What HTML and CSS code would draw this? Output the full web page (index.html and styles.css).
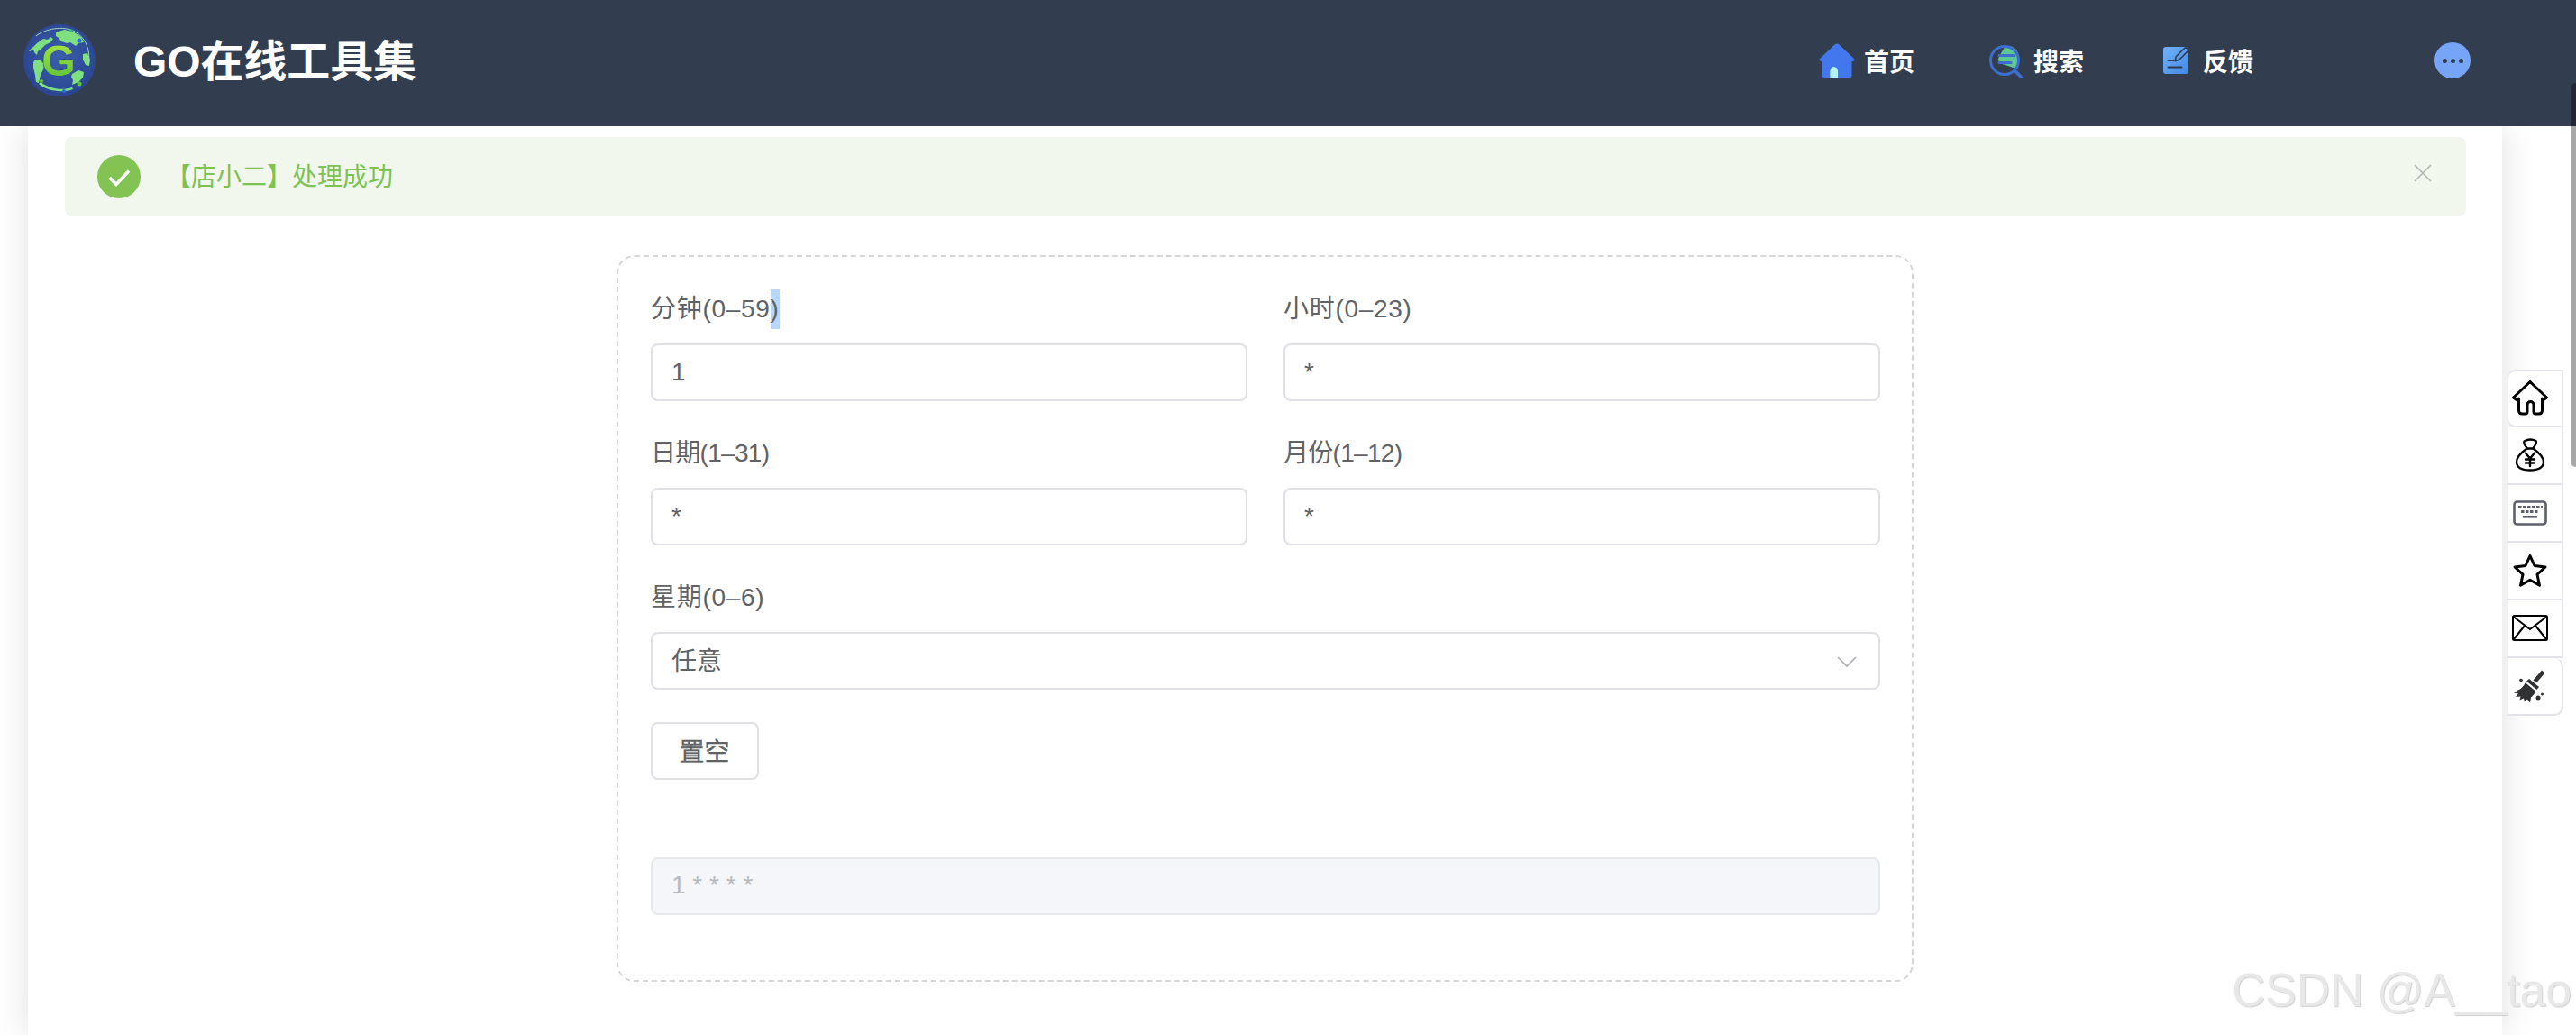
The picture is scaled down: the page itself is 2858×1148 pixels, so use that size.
FILE: index.html
```html
<!DOCTYPE html>
<html lang="zh-CN">
<head>
<meta charset="utf-8">
<title>GO在线工具集</title>
<link rel="stylesheet" href="styles.css">
</head>
<body>
<header class="topbar">
  <svg class="logo" viewBox="0 0 80 80" aria-hidden="true">
    <defs>
      <radialGradient id="globe" cx="50%" cy="45%" r="55%"><stop offset="0" stop-color="#3b5fae"/><stop offset="1" stop-color="#2b4590"/></radialGradient>
      <linearGradient id="gmark" x1="0" y1="0" x2="0" y2="1"><stop offset="0" stop-color="#b0e645"/><stop offset="1" stop-color="#55bf38"/></linearGradient>
    </defs>
    <circle cx="40" cy="40" r="40" fill="url(#globe)"/>
    <g fill="#7fe07f">
      <path d="M6 29l5-4 4-4 7-5 5 1 3-3 3 2-3 4-6 3-5 5-3 2-1 4-3-3-1-3-4 2z"/>
      <path d="M13 39l6 1 4 4-1 6-3 6-2 9-3-1-1-8-2-8 0-6z"/>
      <path d="M36 9l9-3 10 2 9 6 3 6-6 1-3 3-6-4-4 1-6-2-3-4-3-2z"/>
      <path d="M54 55l7-4 6 2-1 6-5 5-7 3 1-5-2-4z"/>
      <path d="M66 33l5-1 3 7-1 7-4-1-3-6z"/>
      <path d="M17 66c8 7 24 11 38 6l-1-2c-12 4-26 1-35-6z"/>
    </g>
    <path d="M14 13c10-8 30-12 43-5 11 6 18 20 15 35" fill="none" stroke="#9fd6c0" stroke-width="1"/>
    <circle cx="52" cy="7" r="2" fill="#3dbb7a"/><circle cx="62" cy="18" r="2.500" fill="#2a6fe0"/>
    <circle cx="62" cy="66" r="2.500" fill="#5ec43a"/><circle cx="45" cy="74" r="2" fill="#2a6fe0"/><circle cx="20" cy="63" r="2" fill="#5ec43a"/>
    <text class="logo-g" x="39" y="57" text-anchor="middle" fill="url(#gmark)">G</text>
  </svg>
  <h1 class="brand">GO在线工具集</h1>
  <nav class="mainnav">
    <a class="navitem">
      <svg class="navicon" viewBox="0 0 40 40" aria-hidden="true">
        <path d="M20 1.500q1.500 0 2.500 1L39 18q1.500 2-1 3h-1.500v15.500q0 2.500-2.500 2.500H6q-2.500 0-2.500-2.500V21H2q-2.500-1-1-3L17.500 2.500q1-1 2.500-1z" fill="#4377ee"/>
        <path d="M13.500 39V31a6.500 6.500 0 0 1 13 0v8z" fill="#b5f2ff" transform="translate(3.300 6.400) scale(.67 .84)"/>
      </svg>
      <span>首页</span>
    </a>
    <a class="navitem">
      <svg class="navicon" viewBox="0 0 40 40" aria-hidden="true">
        <path d="M19 5h4c8 1 11 8 11 14 0 5-2 8-4 11l-8-3-10-3-1-5 3-6z" fill="#5cc796" transform="translate(0 -1)"/>
        <circle cx="18" cy="20" r="15.500" fill="none" stroke="#3c6ed0" stroke-width="3"/>
        <path d="M29 31l8 8" stroke="#3c6ed0" stroke-width="3.600" stroke-linecap="round"/>
        <path d="M12 14.500h17M12 22.500h13" stroke="#3c6ed0" stroke-width="3.200" stroke-linecap="round"/>
      </svg>
      <span>搜索</span>
    </a>
    <a class="navitem">
      <svg class="navicon" viewBox="0 0 40 40" aria-hidden="true">
        <defs><linearGradient id="doc" x1="0" y1="0" x2="1" y2="1"><stop offset="0" stop-color="#72b2f8"/><stop offset="1" stop-color="#4189e4"/></linearGradient></defs>
        <rect x="6" y="5" width="28" height="30" rx="3" fill="url(#doc)"/>
        <path d="M20 16l9-9a2.500 2.500 0 0 1 4 3l-9 9-4.500 1.500z" fill="#5a9df0" stroke="#2e3d52" stroke-width="1.600"/>
        <path d="M11.500 20h6M11.500 27.500h15" stroke="#2e3d52" stroke-width="2" stroke-linecap="round"/>
      </svg>
      <span>反馈</span>
    </a>
  </nav>
  <button class="morebtn" aria-label="更多"><i></i><i></i><i></i></button>
</header>

<main class="page">
  <div class="alert">
    <svg class="alert-icon" viewBox="0 0 48 48" aria-hidden="true">
      <circle cx="24" cy="24" r="24" fill="#82c354"/>
      <path d="M13.500 25l7.500 7.500 14-15" fill="none" stroke="#fff" stroke-width="3.600"/>
    </svg>
    <span class="alert-text">【店小二】处理成功</span>
    <svg class="alert-close" viewBox="0 0 20 20" aria-hidden="true"><path d="M1 1l18 18M19 1L1 19" stroke="#b3b5b3" stroke-width="1.600"/></svg>
  </div>

  <section class="panel">
    <div class="grid">
      <div class="field">
        <label class="label">分钟(0–59<span class="picked">)</span></label>
        <div class="input">1</div>
      </div>
      <div class="field">
        <label class="label">小时(0–23)</label>
        <div class="input">*</div>
      </div>
      <div class="field">
        <label class="label tight">日期(1–31)</label>
        <div class="input">*</div>
      </div>
      <div class="field">
        <label class="label tight">月份(1–12)</label>
        <div class="input">*</div>
      </div>
      <div class="field wide">
        <label class="label">星期(0–6)</label>
        <div class="input select">
          <span>任意</span>
          <svg class="chevron" viewBox="0 0 22 12" aria-hidden="true"><path d="M1 1l10 10L21 1" fill="none" stroke="#a8abb2" stroke-width="1.600"/></svg>
        </div>
      </div>
    </div>
    <button class="btn">置空</button>
    <div class="input result">1 * * * *</div>
  </section>
</main>

<aside class="sidetools">
  <a class="tool">
    <svg viewBox="0 0 40 40" aria-hidden="true"><path d="M1.500 19L20 1.500 38.500 19l-3.500 2.500-1.500-1.500v13q0 4-4 4h-3.500q-2 0-2-2.500V27a3.500 3.500 0 0 0-7 0v7.500q0 2.500-2 2.500h-3.500q-4 0-4-4V20L5 21.500z" fill="none" stroke="#000" stroke-width="3" stroke-linejoin="round"/></svg>
  </a>
  <a class="tool">
    <svg viewBox="0 0 40 40" aria-hidden="true"><g fill="none" stroke="#000" stroke-width="2.400" stroke-linecap="round" stroke-linejoin="round"><path d="M13.500 4.500c4-2.500 9-2.500 13-.5 1.500 2-1 5.500-3.500 8.500h-6C14.500 9.500 12.500 6.500 13.500 4.500z"/><path d="M16.500 12.500c-7 5-12 10-11.500 15.500C5.500 33.500 10 36.500 20 36.500s14.500-3 15-8.500c.5-5.500-4.500-10.500-11.500-15.500"/><path d="M15 17.500l5 6 5-6M20 23.500V32M15 24.500h10M15 28.500h10"/></g></svg>
  </a>
  <a class="tool">
    <svg viewBox="0 0 40 40" aria-hidden="true"><rect x="2.500" y="7.500" width="35" height="25" rx="3" fill="none" stroke="#5c6068" stroke-width="2.600"/><g fill="#5c6068"><rect x="7" y="12" width="3.500" height="3"/><rect x="12" y="12" width="3.500" height="3"/><rect x="17" y="12" width="3.500" height="3"/><rect x="22" y="12" width="3.500" height="3"/><rect x="27" y="12" width="3.500" height="3"/><rect x="32" y="12" width="2" height="3"/><rect x="10" y="17" width="3.500" height="3"/><rect x="15" y="17" width="3.500" height="3"/><rect x="20" y="17" width="3.500" height="3"/><rect x="25" y="17" width="3.500" height="3"/><rect x="12" y="23" width="16" height="2.600"/></g></svg>
  </a>
  <a class="tool">
    <svg viewBox="0 0 40 40" aria-hidden="true"><path d="M20 3.500l5 11 12 1.500-9 8.200 2.500 12L20 30.200 9.500 36.200l2.500-12-9-8.200 12-1.500z" fill="none" stroke="#000" stroke-width="3" stroke-linejoin="round"/></svg>
  </a>
  <a class="tool">
    <svg viewBox="0 0 40 40" aria-hidden="true"><g fill="none" stroke="#000" stroke-width="2"><rect x="1" y="6" width="38" height="27" rx="1.500"/><path d="M1.500 7L20 21 38.500 7M1.500 32.500L14 17M38.500 32.500L26 17"/></g></svg>
  </a>
  <a class="tool">
    <svg viewBox="0 0 40 40" aria-hidden="true"><g fill="#303133"><path d="M33 2.500l3.500 3-9.500 11-3.500-3z"/><path d="M19 12l11 9-2.500 3-11.500-9.500z"/><path d="M14.500 16l11.500 9.500c-1 3.500-3 5.500-5 7l-1 6-3-4-3 3-1-4-4.500 2 1-4-5.500.5 3-3.500-5-1 4.500-3c3-1 6-3.500 8.500-8.500z"/><circle cx="29" cy="33" r="2.500"/><circle cx="33.500" cy="29" r="1.500"/><circle cx="10" cy="13.500" r="1.800"/></g></svg>
  </a>
</aside>

<div class="thumb"></div>
<div class="watermark">CSDN @A__tao</div>
</body>
</html>
```
FILE: styles.css
```css
* { box-sizing: border-box; }
html, body { height: 100%; }
body {
  margin: 0;
  height: 1148px;
  overflow: hidden;
  background: #fff;
  color: #606266;
  font-family: "Liberation Sans", "Noto Sans CJK SC", sans-serif;
  font-size: 28px;
}

/* top bar */
.topbar {
  position: relative;
  z-index: 2;
  height: 140px;
  display: flex;
  align-items: center;
  padding: 0 117px 6px 26px;
  background: #323e50;
  color: #fff;
}
.logo { width: 80px; height: 80px; flex: none; }
.logo-g {
  font: bold 48px "Liberation Sans", sans-serif;
  stroke: #2b4590;
  stroke-width: 1px;
  paint-order: stroke;
}
.brand {
  margin: 4px 0 0 42px;
  font-size: 48px;
  font-weight: bold;
  line-height: 60px;
  letter-spacing: -.1px;
}
.mainnav { margin-left: auto; display: flex; gap: 82px; }
.navitem {
  display: flex;
  align-items: center;
  gap: 10px;
  font-weight: bold;
  font-size: 28px;
}
.navicon { width: 40px; height: 40px; flex: none; }
.morebtn {
  margin-left: 201px;
  width: 40px;
  height: 40px;
  padding: 0;
  border: 0;
  border-radius: 50%;
  background: #76a4f6;
  display: flex;
  align-items: center;
  justify-content: center;
  gap: 4px;
}
.morebtn i { width: 5px; height: 5px; border-radius: 50%; background: #323e50; }

/* page card */
.page {
  margin-left: 31px;
  width: 2745px;
  height: 1008px;
  padding-top: 12px;
  background: #fff;
  box-shadow: 0 0 36px rgba(0, 0, 0, .13);
}
.alert {
  margin: 0 40px 0 41px;
  height: 88px;
  display: flex;
  align-items: center;
  padding: 0 38px 0 36px;
  border-radius: 8px;
  background: #f1f7ed;
  color: #7ec253;
}
.alert-icon { width: 48px; height: 48px; flex: none; }
.alert-text { margin-left: 28px; padding-top: 2px; line-height: 40px; }
.alert-close { margin: -8px 0 0 auto; width: 20px; height: 20px; flex: none; }

/* form panel */
.panel {
  width: 1439px;
  height: 806px;
  margin: 43px auto 0;
  padding: 36px 35px 0 36px;
  border: 2px dashed #d6d6d6;
  border-radius: 20px;
}
.grid {
  display: grid;
  grid-template-columns: 1fr 1fr;
  column-gap: 40px;
}
.field { margin-bottom: 36px; }
.wide { grid-column: 1 / -1; }
.label {
  display: block;
  height: 44px;
  margin-bottom: 16px;
  line-height: 44px;
  letter-spacing: .7px;
}
.tight { letter-spacing: -.7px; }
.picked {
  display: inline-block;
  height: 44px;
  background: #b9d6fb;
}
.input {
  height: 64px;
  padding: 0 21px;
  display: flex;
  align-items: center;
  border: 2px solid #dfdfe6;
  border-radius: 8px;
  background: #fff;
  line-height: 60px;
}
.select { justify-content: space-between; padding: 2px 24px 0 21px; }
.chevron { width: 22px; height: 12px; flex: none; }
.btn {
  display: block;
  width: 120px;
  height: 64px;
  padding: 0 1px 2px 0;
  border: 2px solid #dfdfe6;
  border-radius: 8px;
  background: #fff;
  color: #606266;
  font: inherit;
  -webkit-text-stroke: .3px #606266;
}
.result {
  margin-top: 86px;
  padding-bottom: 2px;
  border-color: #e6e8ee;
  background: #f5f6fa;
  color: #b8b9bd;
}

/* floating tools */
.sidetools {
  position: fixed;
  top: 410px;
  left: 2781px;
  z-index: 1;
  width: 63px;
  display: flex;
  flex-direction: column;
}
.tool {
  height: 64px;
  display: flex;
  align-items: center;
  justify-content: center;
  padding: 0 11px 0 0;
  background: #fff;
  border: 2px solid #e2e2e8;
  border-top: 0;
  border-left-color: #eeeef2;
}
.tool:first-child {
  border-top: 2px solid #e2e2e8;
  border-radius: 10px 0 0 10px;
}
.tool:last-child { border-radius: 0 10px 10px 0; }
.tool svg { width: 40px; height: 40px; flex: none; }

/* overlays */
.thumb {
  position: fixed;
  top: 92px;
  right: 0;
  z-index: 3;
  width: 6px;
  height: 426px;
  border-radius: 6px 0 0 6px;
  background: rgba(0, 0, 0, .34);
}
.watermark {
  position: fixed;
  right: 5px;
  top: 1068px;
  z-index: 3;
  color: #e8e8e8;
  font-size: 51.700px;
  line-height: 60px;
  text-shadow: 1px 1px 1px #cfcfcf;
  white-space: nowrap;
}
```
